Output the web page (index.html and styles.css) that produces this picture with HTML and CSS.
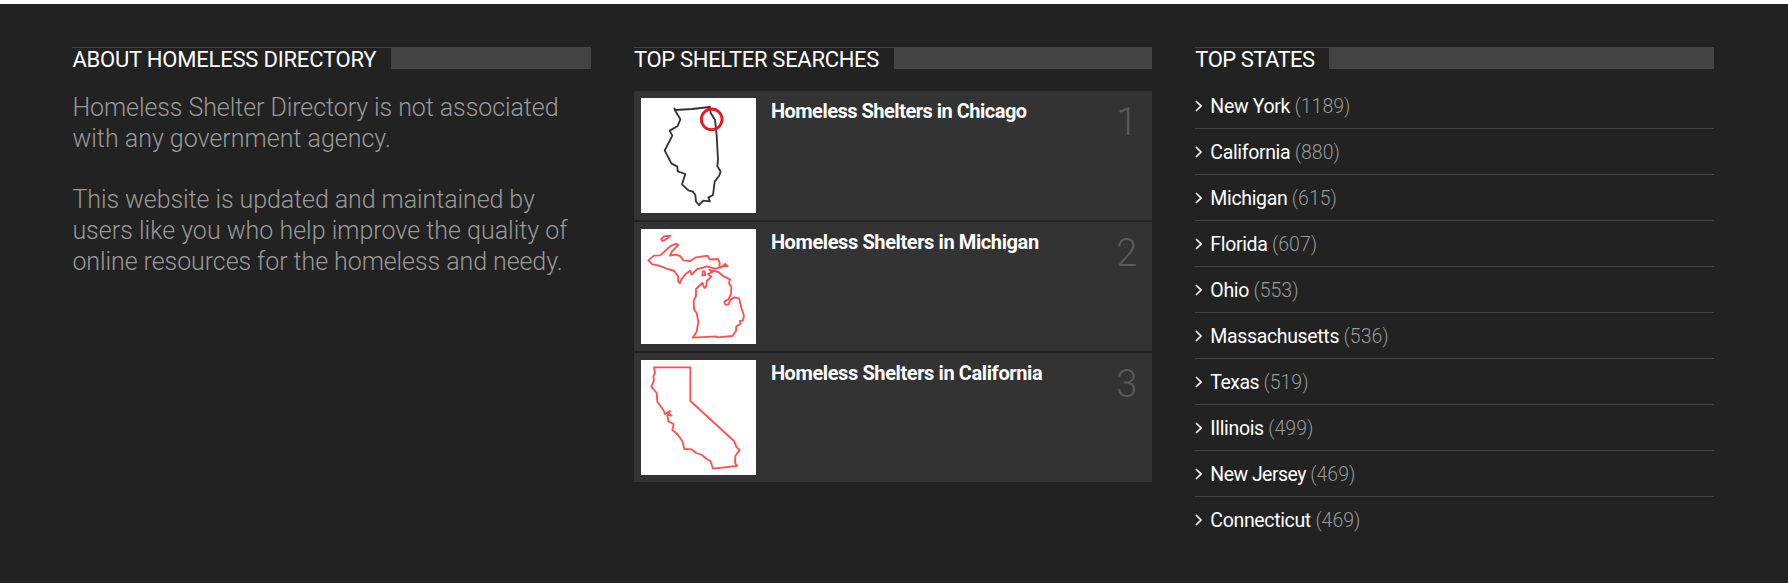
FILE: index.html
```html
<!DOCTYPE html>
<html lang="en">
<head>
<meta charset="utf-8">
<title>Homeless Shelter Directory</title>
<link rel="stylesheet" href="styles.css">
</head>
<body>
<footer class="footer">
  <section class="column">
    <h3 class="heading"><span class="heading-text heading-about">ABOUT HOMELESS DIRECTORY</span></h3>
    <div class="about">
      <p><span class="tight">Homeless Shelter Directory is not associated</span><br><span>with any government agency.</span></p>
      <p><span class="tight">This website is updated and maintained by</span><br><span>users like you who help improve the quality of</span><br><span class="tight">online resources for the homeless and needy.</span></p>
    </div>
  </section>
  <section class="column">
    <h3 class="heading"><span class="heading-text heading-searches">TOP SHELTER SEARCHES</span></h3>
    <div class="cards">
      <a class="card">
        <svg class="map" viewBox="15 18 345 345"><path class="outline dark" d="M115 49L118 54L168 51L222 45L224 63L237 83L242 130L246 203L244 222L254 239L249 252L236 269L231 309L217 317L222 328L202 326L189 339L180 329L178 309L171 299L157 295L138 277L148 246L125 238L124 224L106 214L86 175L109 131L101 116L125 102L133 82L118 57Z"/><circle class="marker" cx="227" cy="82" r="31"/></svg>
        <span class="card-title title-1">Homeless Shelters in Chicago</span><span class="rank">1</span>
      </a>
      <a class="card">
        <svg class="map" viewBox="15 18 345 345"><path class="outline" d="M75 49L84 40L103 38L95 46L80 54ZM37 112L54 98L73 97L102 70L120 62L127 66L108 85L102 98L119 95L132 99L142 112L163 114L180 103L215 98L220 109L246 108L251 119L250 129L257 133L236 137L212 130L202 134L184 138L167 155L162 143L149 153L136 169L132 181L126 174L127 161L115 144L92 137L69 128L49 124ZM259 130L268 123L275 130ZM200 145L206 145L208 156L199 157ZM227 142L247 147L263 160L282 169L279 181L286 192L285 213L277 229L265 236L268 245L277 245L284 229L297 223L309 226L317 257L324 278L320 293L312 293L313 303L301 310L300 324L289 339L243 343L241 340L170 344L182 326L187 297L182 270L174 259L173 232L180 219L180 198L199 180L205 195L211 190L212 174L226 161L216 153L229 147L220 141Z"/></svg>
        <span class="card-title">Homeless Shelters in Michigan</span><span class="rank">2</span>
      </a>
      <a class="card">
        <svg class="map" viewBox="15 18 345 345"><path class="outline" d="M54 40H163V141L294 261L302 280L311 288L298 306L297 326L303 336L231 344L223 321L212 315L198 303L181 297L166 286L145 285L139 261L123 239L109 228L113 210L97 202L94 182L107 185L99 179L102 171L87 180L82 168L64 143L62 117L46 98L54 79L52 68L57 57Z"/></svg>
        <span class="card-title">Homeless Shelters in California</span><span class="rank">3</span>
      </a>
    </div>
  </section>
  <section class="column">
    <h3 class="heading"><span class="heading-text heading-states">TOP STATES</span></h3>
    <ul class="states">
      <li><svg class="chevron" viewBox="0 0 8 12"><path d="M1 1L6 6L1 11"/></svg><a>New York</a><span>(1189)</span></li>
      <li><svg class="chevron" viewBox="0 0 8 12"><path d="M1 1L6 6L1 11"/></svg><a>California</a><span>(880)</span></li>
      <li><svg class="chevron" viewBox="0 0 8 12"><path d="M1 1L6 6L1 11"/></svg><a>Michigan</a><span>(615)</span></li>
      <li><svg class="chevron" viewBox="0 0 8 12"><path d="M1 1L6 6L1 11"/></svg><a>Florida</a><span>(607)</span></li>
      <li><svg class="chevron" viewBox="0 0 8 12"><path d="M1 1L6 6L1 11"/></svg><a>Ohio</a><span>(553)</span></li>
      <li><svg class="chevron" viewBox="0 0 8 12"><path d="M1 1L6 6L1 11"/></svg><a>Massachusetts</a><span>(536)</span></li>
      <li><svg class="chevron" viewBox="0 0 8 12"><path d="M1 1L6 6L1 11"/></svg><a class="narrow">Texas</a><span>(519)</span></li>
      <li><svg class="chevron" viewBox="0 0 8 12"><path d="M1 1L6 6L1 11"/></svg><a>Illinois</a><span>(499)</span></li>
      <li><svg class="chevron" viewBox="0 0 8 12"><path d="M1 1L6 6L1 11"/></svg><a class="narrow">New Jersey</a><span>(469)</span></li>
      <li><svg class="chevron" viewBox="0 0 8 12"><path d="M1 1L6 6L1 11"/></svg><a>Connecticut</a><span>(469)</span></li>
    </ul>
  </section>
</footer>
</body>
</html>
```
FILE: styles.css
```css
* { box-sizing: border-box; margin: 0; padding: 0; }
body { background: #222; font-family: Roboto, "Open Sans", sans-serif; }
.footer {
  display: grid;
  grid-template-columns: 518.4px 518.4px 518.4px;
  column-gap: 43.1px;
  height: 583px;
  overflow: hidden;
  padding: 43px 0 0 72.4px;
  border-top: 4px solid #fff;
  background: #222;
}
.heading { height: 22px; background: #444; border-top: 1px solid #444; display: flex; font-size: 22px; font-weight: 400; line-height: 23px; }
.heading-text { background: #222; color: #fff; height: 21px; white-space: nowrap; }
.heading-about { width: 318.6px; letter-spacing: -0.2px; }
.heading-searches { width: 260px; letter-spacing: -0.3px; }
.heading-states { width: 133.5px; letter-spacing: -0.5px; }
.about { padding-top: 23px; color: #999; font-size: 25px; font-weight: 300; line-height: 31px; white-space: nowrap; }
.about p + p { margin-top: 30px; }
.tight { letter-spacing: -0.08px; }
.cards { display: flex; flex-direction: column; gap: 2px; margin-top: 22px; }
.card { display: flex; align-items: flex-start; height: 129px; padding: 7px; background: #333; }
.map { width: 115px; height: 115px; background: #fff; flex: none; }
.outline { fill: none; stroke: #ff5050; stroke-width: 5.5; stroke-linejoin: round; }
.dark { stroke: #333; }
.marker { fill: none; stroke: #e31b23; stroke-width: 8.5; }
.card-title { margin-left: 15px; color: #fff; font-size: 20px; font-weight: 700; line-height: 26px; letter-spacing: -0.4px; white-space: nowrap; }
.title-1 { letter-spacing: -0.5px; }
.rank { margin-left: auto; padding-right: 8px; color: #5a5a5a; font-size: 38px; font-weight: 300; line-height: 48px; }
.states { list-style: none; margin-top: 14px; }
.states li { display: flex; align-items: center; height: 46px; padding-top: 1px; border-bottom: 1px solid #444; font-size: 19.5px; font-weight: 400; }
.states li:last-child { border-bottom: 0; padding-top: 0; }
.states a { color: #fff; letter-spacing: -0.35px; }
.states .narrow { letter-spacing: -0.55px; }
.states span { margin-left: 4.5px; color: #999; font-weight: 300; }
.chevron { width: 8px; height: 12px; margin-right: 7px; fill: none; stroke: #fff; stroke-width: 1.7; }
```
